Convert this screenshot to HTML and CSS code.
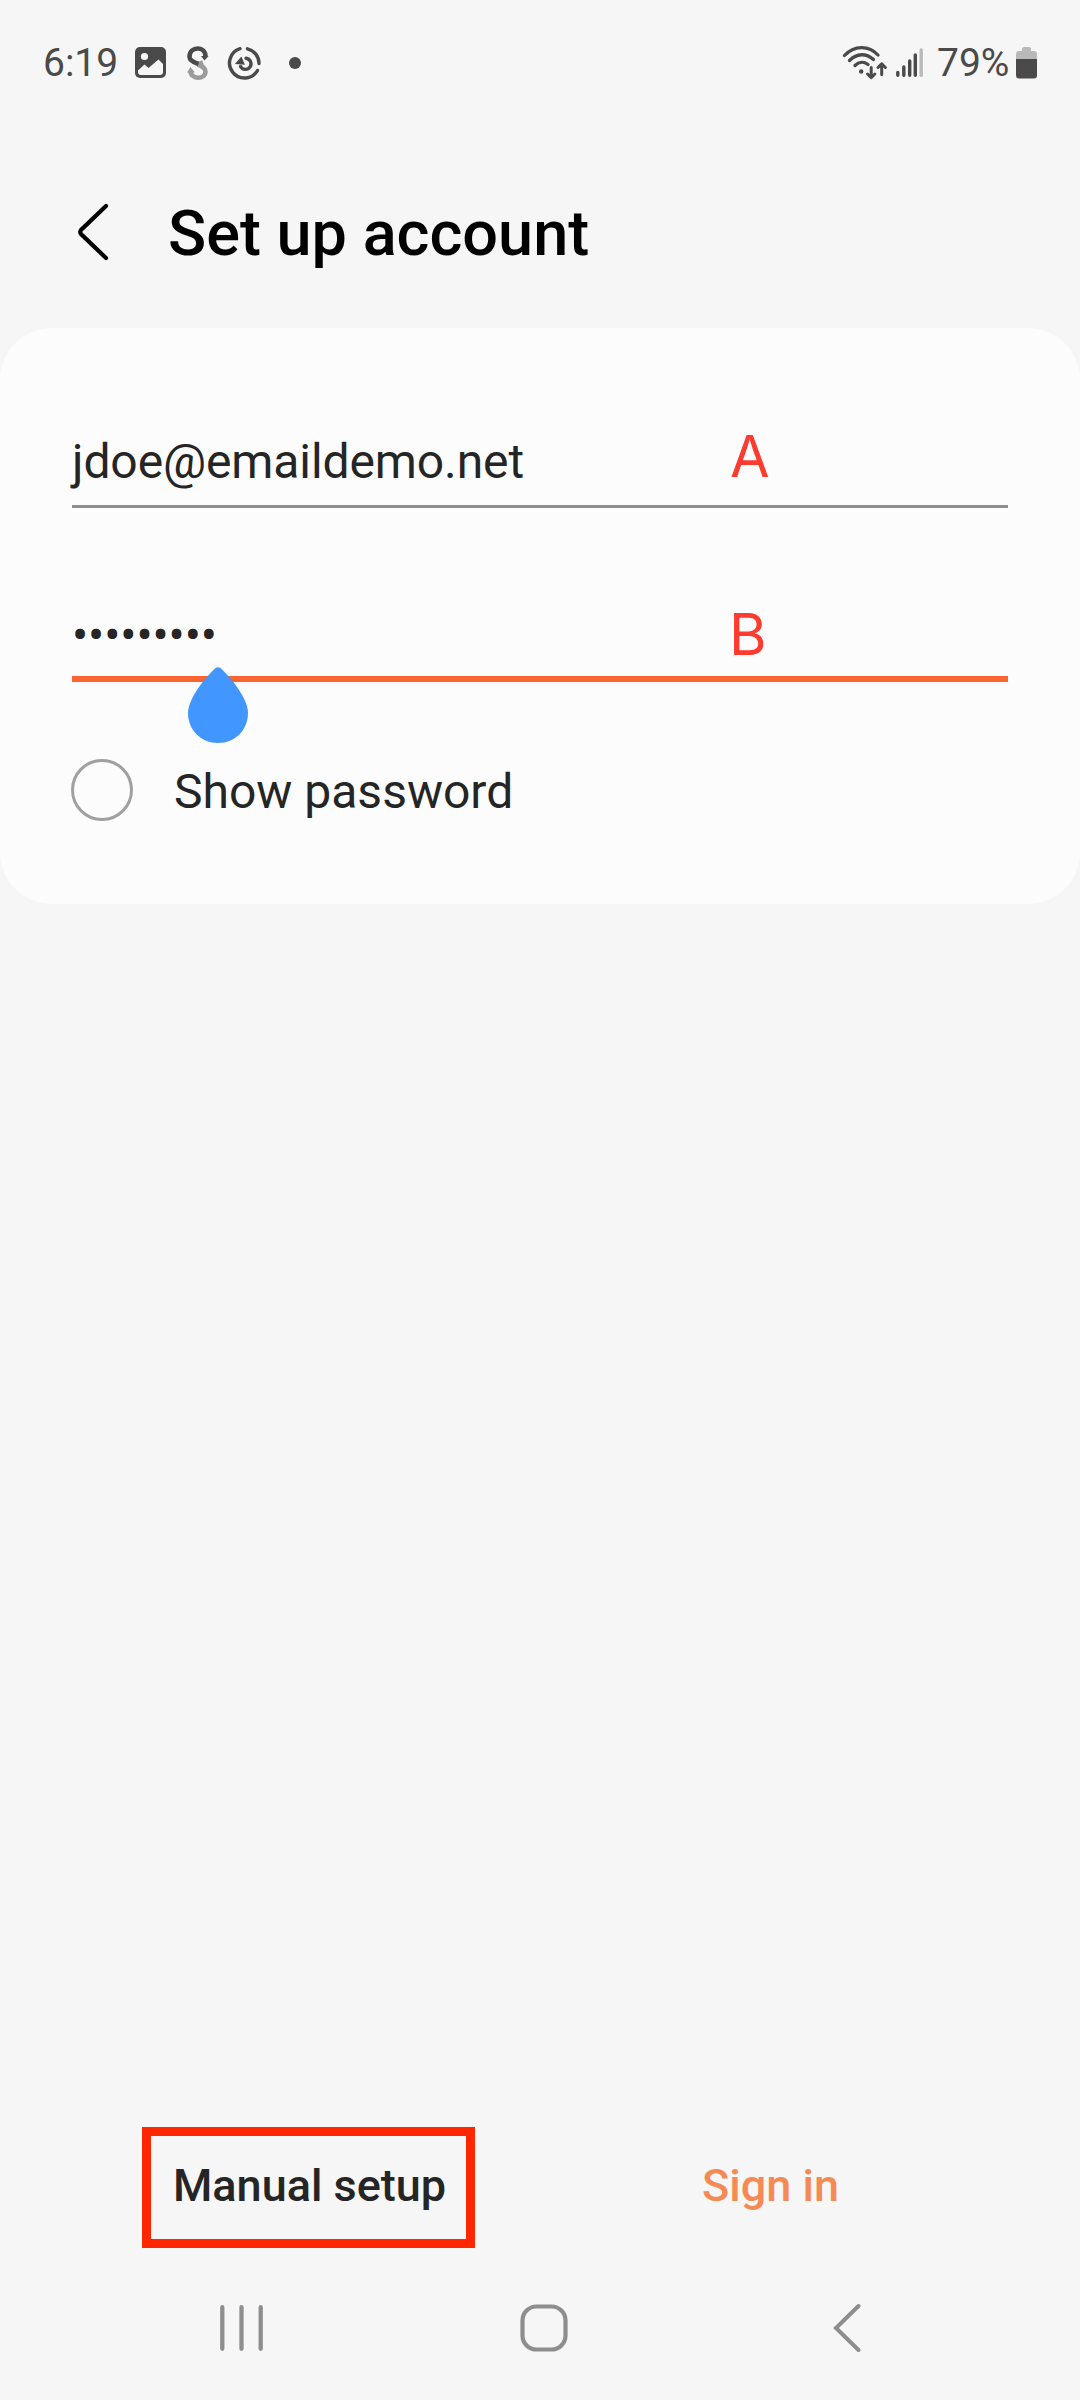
FILE: index.html
```html
<!DOCTYPE html>
<html lang="en">
<head>
<meta charset="utf-8">
<title>Set up account</title>
<link rel="stylesheet" href="styles.css">
</head>
<body>
<div class="screen">
  <div class="status">
    <span class="clock">6:19</span>
    <svg class="gallery" width="31" height="31" viewBox="135 47 31 31"><rect x="135" y="47" width="31" height="31" rx="5" fill="#4a4a4a"/><circle cx="144.5" cy="56.5" r="3.6" fill="#f6f6f6"/><path d="M138 70.500l6.500-6 4 3.500 10-8.500 4.500 4.500v8q0 3-3 3h-19q-3 0-3-3z" fill="#f6f6f6"/></svg>
    <svg class="sync" width="24" height="36" viewBox="186 44 24 36" fill="none" stroke-width="4.600"><path d="M198 63.500C203 65.500 205.500 67 205.500 70.500C205.500 79 191 79 190.500 70M198 63.500l5-2" stroke="#9b9b9b"/><path d="M187 71.500l3.500-5.500 4.500 5.500z" fill="#9b9b9b"/><path d="M198.500 63C192 61 189.500 59 189.500 55.500C190 45 205 45 205.500 55" stroke="#4a4a4a"/><path d="M201 55h7.500l-4 4.500z" fill="#4a4a4a"/></svg>
    <svg class="target" width="34" height="34" viewBox="227 45 34 34" fill="none" stroke="#4a4a4a" stroke-width="3.400" stroke-linecap="round"><path d="M240 47.700A15 15 0 1 0 257.500 69.500M247.500 47.800A15 15 0 0 1 259 62.500"/><path d="M246 57.200A5.600 5.600 0 1 1 240.500 65.500"/><path d="M236.500 62.300l4.700-5.300 2.500 6z" fill="#4a4a4a" stroke-width="1.500"/></svg>
    <span class="dot"></span>
    <svg class="wifi" width="46" height="35" viewBox="842 44 46 35" fill="none" stroke="#4a4a4a" stroke-width="3.300" stroke-linecap="round" stroke-linejoin="round"><path d="M844.500 54.500C854 44 869 44 878 54M849.500 59.500C857 52 866 52 873.500 58.500M855 64.500C859 60.500 864 60.500 868 63.500"/><circle cx="861.200" cy="70.500" r="2.200" fill="#4a4a4a" stroke="none"/><path d="M871.200 66.500v10M867.500 73l3.700 3.700 3.700-3.700M881.700 73.500v-10M878 66.500l3.700-3.700 3.700 3.700" stroke-width="3"/></svg>
    <svg class="signal" width="28" height="30" viewBox="896 47 28 30" stroke-width="3.400" stroke-linecap="round"><path d="M897.800 71.500v2.800M903.800 66v8.300M909.700 60v14.300M915.300 54v20.300" stroke="#4a4a4a"/><path d="M921.200 49v25.300" stroke="#b9b9b9"/></svg>
    <span class="percent">79%</span>
    <svg class="battery" width="21" height="32" viewBox="1016 46 21 32"><path d="M1022 50v-2q0-2 2-2h5q2 0 2 2v2h3q3 0 3 3v6h-21v-6q0-3 3-3z" fill="#b9b9b9"/><path d="M1016 58h21v16.500q0 3-3 3h-15q-3 0-3-3z" fill="#4a4a4a"/></svg>
  </div>
  <header class="header">
    <svg width="32" height="60" viewBox="77 202 32 60"><path d="M106 206L81 230q-1.500 2 0 4L106 258" fill="none" stroke="#000" stroke-width="4.200" stroke-linecap="round"/></svg>
    <h1>Set up account</h1>
  </header>
  <main class="card">
    <div class="field"><span class="value">jdoe@emaildemo.net</span><span class="mark mark-a">A</span></div>
    <div class="field focused"><span class="value">•••••••••</span><span class="mark mark-b">B</span>
      <svg class="handle" width="60" height="76" viewBox="0 0 60 76"><path d="M27 1.500Q30-1 33 1.500C42 10 60 31 60 46C60 63 47 76 30 76S0 63 0 46C0 31 18 10 27 1.500z" fill="#4296ff"/></svg>
    </div>
    <div class="show"><span class="radio"></span><span class="label">Show password</span></div>
  </main>
  <div class="actions"><div class="manual">Manual setup</div><div class="signin">Sign in</div></div>
  <nav class="nav">
    <svg class="recents" width="43" height="46" viewBox="0 0 43 46"><path d="M2.300 2.200v41.600M21.500 2.200v41.600M40.700 2.200v41.600" stroke="#8e8e8e" stroke-width="4.300" stroke-linecap="round"/></svg>
    <svg class="home" width="48" height="48" viewBox="0 0 48 48"><rect x="2.500" y="2.500" width="43" height="43" rx="14" fill="none" stroke="#8e8e8e" stroke-width="4.200"/></svg>
    <svg class="back" width="28" height="50" viewBox="0 0 28 50"><path d="M25.500 3L3 25l22.500 22" fill="none" stroke="#8e8e8e" stroke-width="4" stroke-linecap="round"/></svg>
  </nav>
</div>
</body>
</html>
```
FILE: styles.css
```css
* { box-sizing: border-box; }
body { margin: 0; background: #f6f6f6; font-family: Roboto, sans-serif; color: #252525; }
svg { display: block; flex: none; }
.screen { width: 1080px; height: 2400px; display: flex; flex-direction: column; }

.status { height: 125px; padding-left: 43px; display: flex; align-items: center; color: #4a4a4a; font-size: 39px; line-height: 46px; }
.clock { width: 92px; }
.sync { margin-left: 20px; }
.target { margin-left: 17px; }
.dot { width: 12px; height: 12px; margin-left: 28px; border-radius: 50%; background: #4a4a4a; }
.wifi { margin-left: 541px; }
.signal { margin-left: 8px; }
.percent { width: 79px; margin-left: 13px; }

.header { height: 203px; padding: 75px 0 0 77px; display: flex; align-items: flex-start; gap: 59px; }
.header svg { margin-top: 2px; }
h1 { margin: -1px 0 0; color: #000; font-size: 63px; line-height: 70px; font-weight: 500; white-space: nowrap; }

.card { height: 576px; padding: 0 72px; border-radius: 52px; background: #fcfcfc; font-size: 48px; line-height: 56px; }
.field { height: 180px; position: relative; display: flex; align-items: flex-start; padding-top: 106px; border-bottom: 3px solid #8e8e8e; }
.focused { height: 174px; padding-top: 100px; border-bottom: 6px solid #f96430; }
.value { width: 658px; letter-spacing: -0.1px; white-space: nowrap; }
.mark { color: #ff3b30; font-family: Inter, sans-serif; font-size: 57.5px; line-height: 70px; }
.mark-a { margin: -13px 0 0; }
.mark-b { margin: -9px 0 0 -1px; }
.handle { position: absolute; left: 116px; top: 159px; z-index: 1; }
.show { display: flex; align-items: center; gap: 41px; margin: 77px 0 0 -1px; height: 62px; }
.radio { width: 62px; height: 62px; border: 3px solid #a0a0a0; border-radius: 50%; }
.label { padding-top: 3px; }

.actions { margin-top: 1223px; height: 121px; padding-left: 142px; display: flex; font-size: 45px; line-height: 52px; font-weight: 500; white-space: nowrap; }
.manual { width: 333px; height: 121px; padding: 24px 0 0 22px; border: 9.5px solid #ff2600; }
.signin { padding: 33px 0 0; margin-left: 227px; color: #f68a55; }

.nav { height: 152px; padding: 8px 0 0 220px; display: flex; align-items: center; }
.home { margin-left: 257px; }
.back { margin-left: 265px; }
```
